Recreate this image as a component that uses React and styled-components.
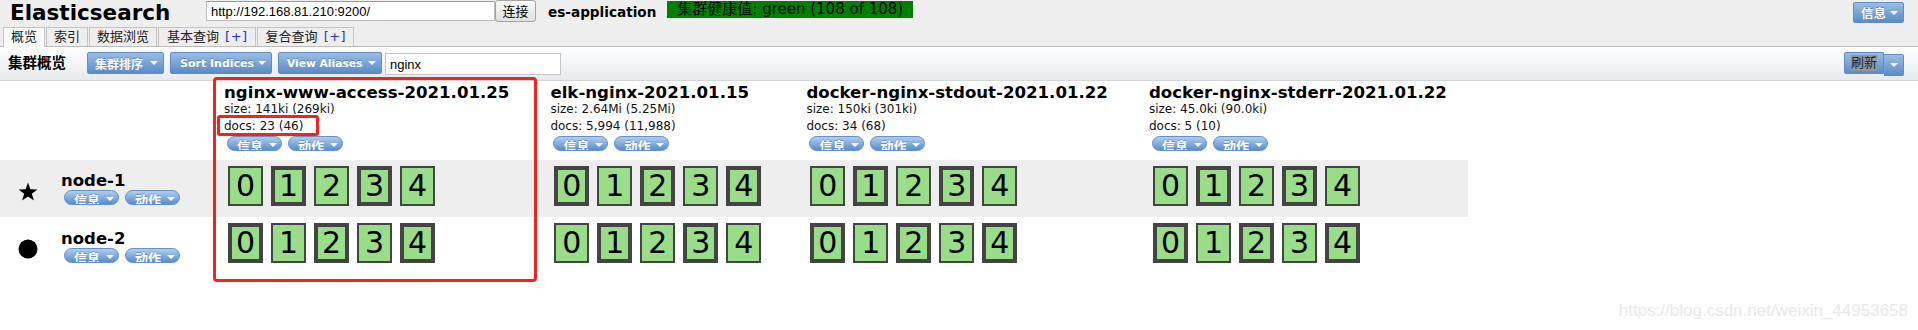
import React from "react";
import styled, { createGlobalStyle } from "styled-components";

const GlobalStyle = createGlobalStyle`
  * { box-sizing: border-box; }
  html, body { margin: 0; padding: 0; background: #ffffff; }
  body {
    width: 1918px;
    height: 330px;
    overflow: hidden;
    font-family: "DejaVu Sans", "Noto Sans CJK SC", sans-serif;
    font-size: 12px;
    color: #000;
  }
`;

const Page = styled.div`
  position: relative;
  width: 1918px;
  height: 330px;
`;

const Header = styled.header`
  background: #eeeeee;
`;

const TopBar = styled.div`
  display: flex;
  align-items: flex-start;
  height: 27px;
  padding: 0 14px 0 10px;
`;

const Logo = styled.h1`
  width: 196px;
  margin: 0;
  font-size: 21.5px;
  line-height: 25px;
  font-weight: bold;
  white-space: nowrap;
`;

const UrlInput = styled.input`
  width: 289px;
  height: 20px;
  margin: 1px 0 0;
  padding: 0 4px;
  border: 1px solid #bdbdbd;
  border-top-color: #9c9c9c;
  background: #fff;
  font: 13px "Liberation Sans", Arial, sans-serif;
  color: #000;
  outline: none;
`;

const ConnectButton = styled.button`
  width: 41px;
  height: 22px;
  margin: 0;
  padding: 0;
  border: 1px solid #a3a3a3;
  border-radius: 3px;
  background: linear-gradient(#fbfbfb, #e0e0e0);
  font: 13px "Noto Sans CJK SC", sans-serif;
  line-height: 20px;
  color: #000;
`;

const ClusterName = styled.span`
  margin-left: 12px;
  padding-top: 2px;
  font-weight: bold;
  font-size: 13.6px;
  line-height: 20px;
  white-space: nowrap;
`;

const HealthBadge = styled.span`
  margin: 1px 0 0 11px;
  height: 17px;
  padding: 0 10px;
  background: #008000;
  color: #000;
  font-size: 15px;
  line-height: 17px;
  white-space: nowrap;
`;

const Caret = styled.span`
  display: inline-block;
  flex: none;
  width: 0;
  height: 0;
  border-left: 4px solid transparent;
  border-right: 4px solid transparent;
  border-top: 4px solid #fff;
`;

const BlueButton = styled.span`
  display: inline-flex;
  align-items: center;
  width: ${(p) => (p.$w ? `${p.$w}px` : "auto")};
  height: ${(p) => p.$h || 22}px;
  margin: ${(p) => p.$m || 0};
  padding: 0 5px 0 ${(p) => p.$pl || 8}px;
  border: 1px solid #5f8cc6;
  border-radius: 2px;
  background: linear-gradient(#9bbde5, #5a8bc8);
  color: #fff;
  font-weight: bold;
  font-size: ${(p) => p.$fs || 12}px;
  white-space: nowrap;
  text-shadow: 0 -1px 0 rgba(30, 60, 110, 0.35);
  ${Caret} {
    margin-left: auto;
  }
`;

const TabBar = styled.nav`
  display: flex;
  align-items: flex-end;
  gap: 1px;
  height: 20px;
  padding-left: 3px;
  border-bottom: 1px solid #bcbcbc;
`;

const Tab = styled.span`
  height: ${(p) => (p.$active ? 20 : 19)}px;
  margin-bottom: ${(p) => (p.$active ? -1 : 0)}px;
  padding: 0 7px 0 ${(p) => (p.$wide ? 8 : 7)}px;
  border: 1px solid #c4c4c4;
  border-bottom: none;
  background: ${(p) => (p.$active ? "#fafafa" : "#eeeeee")};
  font-size: 13px;
  line-height: 18px;
  color: #222;
  white-space: nowrap;
`;

const TabPlus = styled.span`
  margin-left: 6px;
  color: #2233dd;
  font-size: 13px;
  letter-spacing: 0.5px;
`;

const Toolbar = styled.div`
  display: flex;
  align-items: flex-start;
  height: 34px;
  padding: 5px 14px 0 8px;
  background: linear-gradient(#ffffff, #e6eaed);
  border-bottom: 1px solid #d3d6d9;
`;

const ToolbarTitle = styled.span`
  width: 79px;
  font-weight: bold;
  font-size: 14.5px;
  line-height: 22px;
`;

const FilterInput = styled.input`
  width: 176px;
  height: 22px;
  margin: 1px 0 0 3px;
  padding: 0 4px;
  border: 1px solid #c6c6c6;
  background: #fff;
  font: 13px "Liberation Sans", Arial, sans-serif;
  color: #000;
  outline: none;
`;

const RightGroup = styled.div`
  margin-left: auto;
  display: flex;
  align-items: flex-start;
`;

const RefreshMain = styled.span`
  display: inline-flex;
  align-items: center;
  justify-content: center;
  width: 40px;
  height: 22px;
  border: 1px solid #5f8cc6;
  border-radius: 2px 0 0 2px;
  background: linear-gradient(#9bbde5, #5a8bc8);
  font-size: 13px;
`;

const Selected = styled.span`
  background: #8e99a4;
  color: #222;
  line-height: 16px;
`;

const RefreshCaret = styled.span`
  display: inline-flex;
  align-items: center;
  justify-content: center;
  width: 20px;
  height: 22px;
  margin-top: 2px;
  border: 1px solid #5f8cc6;
  border-left: none;
  border-radius: 0 2px 2px 0;
  background: linear-gradient(#9bbde5, #5a8bc8);
`;

const Grid = styled.table`
  border-collapse: collapse;
  border-spacing: 0;
`;

const HeadRow = styled.tr`
  height: 79px;
`;

const NodeRow = styled.tr`
  height: ${(p) => p.$h}px;
  background: ${(p) => (p.$shaded ? "#eeeeee" : "#ffffff")};
`;

const CornerCell = styled.td`
  width: 204px;
  padding: 0;
`;

const IndexHeadCell = styled.td`
  padding: 3px 21px 0 20px;
  vertical-align: top;
  white-space: nowrap;
`;

const IndexName = styled.div`
  font-weight: bold;
  font-size: 16.6px;
  line-height: 17px;
`;

const Meta = styled.div`
  font-size: 12px;
  line-height: 16.5px;
  color: #111;
`;

const PillRow = styled.div`
  display: flex;
  gap: 6px;
  margin: ${(p) => p.$m || "2px 0 0 3px"};
`;

const Pill = styled.span`
  display: inline-flex;
  align-items: flex-start;
  gap: 6px;
  width: 55px;
  height: 15px;
  overflow: hidden;
  padding: 1px 0 0 9px;
  border: 1px solid #6391cb;
  border-radius: 8px;
  background: linear-gradient(#b0cdee, #5a8dcb);
  color: #fff;
  font-weight: bold;
  font-size: 13px;
  line-height: 17px;
  text-shadow: 0 -1px 0 rgba(30, 60, 110, 0.3);
  ${Caret} {
    margin-top: 5px;
  }
`;

const NodeCell = styled.td`
  width: 204px;
  padding: 0 0 0 18px;
  vertical-align: middle;
`;

const NodeLabel = styled.div`
  display: flex;
  align-items: center;
  gap: 23px;
`;

const NodeIcon = styled.svg`
  flex: none;
  margin-top: ${(p) => p.$mt || 0}px;
`;

const NodeName = styled.div`
  font-weight: bold;
  font-size: 16.5px;
  line-height: 18px;
`;

const ShardCell = styled.td`
  padding: 6px 21px 0 20px;
  vertical-align: top;
  white-space: nowrap;
`;

const Shard = styled.span`
  display: inline-block;
  width: 35px;
  height: 40px;
  margin: 0 4px;
  vertical-align: top;
  background: #99dd88;
  box-shadow: inset 0 0 0 ${(p) => (p.$primary ? 4 : 2)}px #444444;
  text-align: center;
  font-size: 30px;
  line-height: 40px;
  color: #000;
`;

const Annotation = styled.div`
  position: absolute;
  left: ${(p) => p.$x}px;
  top: ${(p) => p.$y}px;
  width: ${(p) => p.$w}px;
  height: ${(p) => p.$h}px;
  border: 3px solid #f2221c;
  border-radius: ${(p) => p.$r}px;
  pointer-events: none;
`;

const Watermark = styled.div`
  position: absolute;
  right: 10px;
  top: 301px;
  font: 17px "Liberation Sans", Arial, sans-serif;
  color: #e8e8e8;
`;

const indices = [
  {
    name: "nginx-www-access-2021.01.25",
    size: "size: 141ki (269ki)",
    docs: "docs: 23 (46)",
    primaries: [[1, 3], [0, 2, 4]],
  },
  {
    name: "elk-nginx-2021.01.15",
    size: "size: 2.64Mi (5.25Mi)",
    docs: "docs: 5,994 (11,988)",
    primaries: [[0, 2, 4], [1, 3]],
  },
  {
    name: "docker-nginx-stdout-2021.01.22",
    size: "size: 150ki (301ki)",
    docs: "docs: 34 (68)",
    primaries: [[1, 3], [0, 2, 4]],
  },
  {
    name: "docker-nginx-stderr-2021.01.22",
    size: "size: 45.0ki (90.0ki)",
    docs: "docs: 5 (10)",
    primaries: [[1, 3], [0, 2, 4]],
  },
];

const nodes = [
  { name: "node-1", shape: "star", h: 57 },
  { name: "node-2", shape: "circle", h: 58 },
];

function Pills({ m }) {
  return (
    <PillRow $m={m}>
      <Pill>
        信息 <Caret />
      </Pill>
      <Pill>
        动作 <Caret />
      </Pill>
    </PillRow>
  );
}

function StarIcon() {
  return (
    <NodeIcon width="20" height="19" viewBox="0 0 20 19" $mt={5}>
      <polygon
        points="10,0.5 12.35,7.26 19.51,7.41 13.8,11.74 15.88,18.59 10,14.5 4.12,18.59 6.2,11.74 0.49,7.41 7.65,7.26"
        fill="#000"
      />
    </NodeIcon>
  );
}

function CircleIcon() {
  return (
    <NodeIcon width="20" height="20" viewBox="0 0 20 20" $mt={6}>
      <circle cx="10" cy="10" r="9.5" fill="#000" />
    </NodeIcon>
  );
}

export default function App() {
  return (
    <Page>
      <GlobalStyle />
      <Header>
        <TopBar>
          <Logo>Elasticsearch</Logo>
          <UrlInput defaultValue="http://192.168.81.210:9200/" />
          <ConnectButton>连接</ConnectButton>
          <ClusterName>es-application</ClusterName>
          <HealthBadge>集群健康值: green (108 of 108)</HealthBadge>
          <BlueButton $m="2px 0 0 auto" $h={21} $w={51} $fs={12.5} $pl={7}>
            信息 <Caret />
          </BlueButton>
        </TopBar>
        <TabBar>
          <Tab $active>概览</Tab>
          <Tab>索引</Tab>
          <Tab>数据浏览</Tab>
          <Tab $wide>
            基本查询<TabPlus>[+]</TabPlus>
          </Tab>
          <Tab $wide>
            复合查询<TabPlus>[+]</TabPlus>
          </Tab>
        </TabBar>
      </Header>
      <Toolbar>
        <ToolbarTitle>集群概览</ToolbarTitle>
        <BlueButton $w={77} $fs={12} $pl={7}>
          集群排序 <Caret />
        </BlueButton>
        <BlueButton $w={102} $fs={11} $m="0 0 0 6px" $pl={9}>
          Sort Indices <Caret />
        </BlueButton>
        <BlueButton $w={104} $fs={10.7} $m="0 0 0 6px" $pl={8}>
          View Aliases <Caret />
        </BlueButton>
        <FilterInput defaultValue="nginx" />
        <RightGroup>
          <RefreshMain>
            <Selected>刷新</Selected>
          </RefreshMain>
          <RefreshCaret>
            <Caret />
          </RefreshCaret>
        </RightGroup>
      </Toolbar>
      <Grid>
        <tbody>
          <HeadRow>
            <CornerCell />
            {indices.map((ix) => (
              <IndexHeadCell key={ix.name}>
                <IndexName>{ix.name}</IndexName>
                <Meta>{ix.size}</Meta>
                <Meta>{ix.docs}</Meta>
                <Pills />
              </IndexHeadCell>
            ))}
          </HeadRow>
          {nodes.map((n, ni) => (
            <NodeRow key={n.name} $shaded={ni === 0} $h={n.h}>
              <NodeCell>
                <NodeLabel>
                  {n.shape === "star" ? <StarIcon /> : <CircleIcon />}
                  <div>
                    <NodeName>{n.name}</NodeName>
                    <Pills m="0 0 0 3px" />
                  </div>
                </NodeLabel>
              </NodeCell>
              {indices.map((ix) => (
                <ShardCell key={ix.name}>
                  {[0, 1, 2, 3, 4].map((s) => (
                    <Shard key={s} $primary={ix.primaries[ni].includes(s)}>
                      {s}
                    </Shard>
                  ))}
                </ShardCell>
              ))}
            </NodeRow>
          ))}
        </tbody>
      </Grid>
      <Annotation $x={213} $y={77} $w={324} $h={205} $r={4} />
      <Annotation $x={217} $y={115} $w={102} $h={21} $r={3} />
      <Watermark>https://blog.csdn.net/weixin_44953658</Watermark>
    </Page>
  );
}
